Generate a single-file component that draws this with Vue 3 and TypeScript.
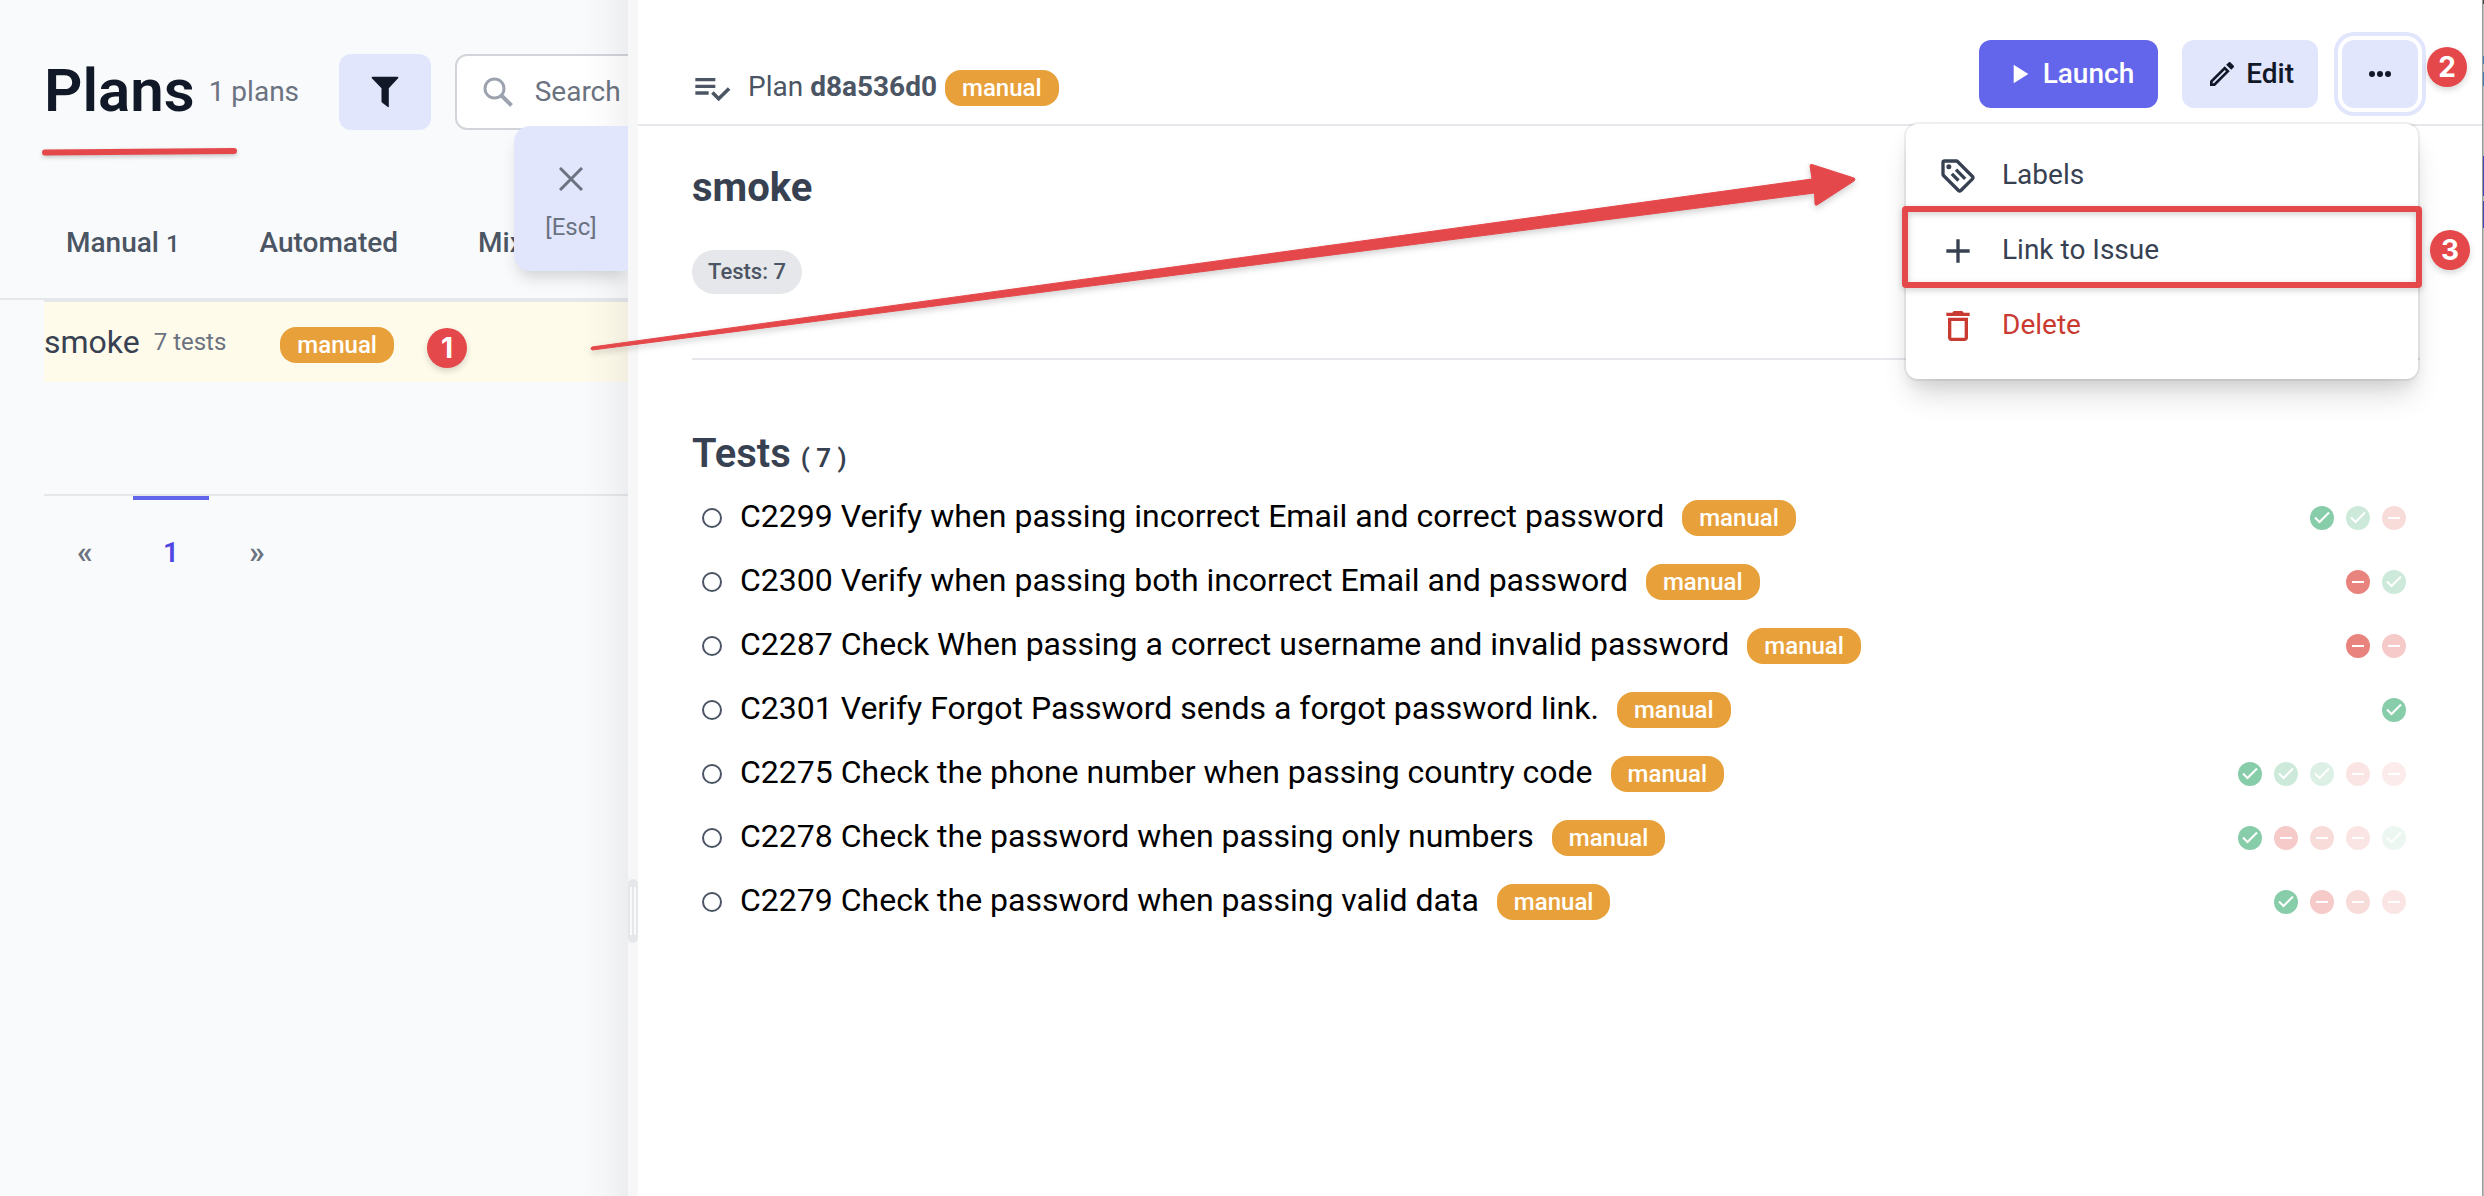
<script setup lang="ts">
import { ref } from 'vue'

type Result = 'pass' | 'fail'

interface Run {
  result: Result
  opacity: number
}

interface TestCase {
  title: string
  runs: Run[]
}

const fade = [1, 0.42, 0.28, 0.2, 0.15]

function runs(...list: [Result, number][]): Run[] {
  return list.map(([result, step]) => ({ result, opacity: fade[step] ?? 0.15 }))
}

const tests: TestCase[] = [
  { title: 'C2299 Verify when passing incorrect Email and correct password', runs: runs(['pass', 0], ['pass', 1], ['fail', 2]) },
  { title: 'C2300 Verify when passing both incorrect Email and password', runs: runs(['fail', 0], ['pass', 1]) },
  { title: 'C2287 Check When passing a correct username and invalid password', runs: runs(['fail', 0], ['fail', 1]) },
  { title: 'C2301 Verify Forgot Password sends a forgot password link.', runs: runs(['pass', 0]) },
  { title: 'C2275 Check the phone number when passing country code', runs: runs(['pass', 0], ['pass', 1], ['pass', 2], ['fail', 3], ['fail', 4]) },
  { title: 'C2278 Check the password when passing only numbers', runs: runs(['pass', 0], ['fail', 1], ['fail', 2], ['fail', 3], ['pass', 4]) },
  { title: 'C2279 Check the password when passing valid data', runs: runs(['pass', 0], ['fail', 1], ['fail', 2], ['fail', 3]) },
]

const search = ref('')
</script>

<template>
  <div class="page">
    <section class="plans">
      <header class="plans-head">
        <h1>Plans</h1>
        <span class="count">1 plans</span>
        <button class="filter" type="button" aria-label="Filter">
          <svg width="28" height="40" viewBox="0 0 28 40"><path d="M1.500 1h25q1 0 .8 1.200-.2.800-.9 1.600L17.800 15v22.300q0 1.200-1 .6l-5.500-5.200q-.8-.6-.8-1.500V15L1.600 3.800Q.9 3 .7 2.200.5 1 1.500 1z" fill="#111827" transform="translate(0 4) scale(1 .82)" /></svg>
        </button>
        <label class="search">
          <svg width="30" height="30" viewBox="0 0 30 30" fill="none" stroke="#9ca3af" stroke-width="3"><circle cx="11.500" cy="11.500" r="9.500" /><path d="M18.500 18.500l10 10" stroke-width="4" /></svg>
          <input v-model="search" type="text" placeholder="Search" aria-label="Search" />
        </label>
        <svg class="underline" width="204" height="16" viewBox="0 0 204 16"><path d="M7 8.500L196 7" stroke="#e5484b" stroke-width="6" stroke-linecap="round" /></svg>
      </header>

      <nav class="tabs">
        <a href="#manual">Manual <small>1</small></a>
        <a href="#automated">Automated</a>
        <a href="#mixed">Mixed</a>
      </nav>

      <div class="list">
        <div class="plan-row">
          <a class="plan-name" href="#smoke">smoke</a>
          <span class="plan-tests">7 tests</span>
          <span class="tag">manual</span>
          <span class="step step-one">1</span>
        </div>
        <nav class="pager" aria-label="Pages">
          <button type="button">«</button>
          <button type="button" class="current">1</button>
          <button type="button">»</button>
        </nav>
      </div>

      <div class="edge"></div>
      <button class="esc" type="button">
        <svg width="24" height="24" viewBox="0 0 24 24" stroke="#6b7280" stroke-width="3"><path d="M1 1l22 22M23 1L1 23" /></svg>
        <span>[Esc]</span>
      </button>
    </section>

    <div class="splitter"><span class="grip"></span></div>

    <main class="panel">
      <header class="panel-head">
        <div class="crumb">
          <svg width="40" height="40" viewBox="0 0 24 24" fill="#4b5563"><path d="M14 10H2v2h12v-2zm0-4H2v2h12V6zM2 16h8v-2H2v2zm19.500-4.500L23 13l-6.990 7-4.510-4.500L13 14l3.010 3 5.490-5.500z" /></svg>
          <span class="crumb-text">Plan <b>d8a536d0</b></span>
          <span class="tag">manual</span>
        </div>
        <div class="actions">
          <button class="btn primary" type="button">
            <svg width="32" height="32" viewBox="0 0 24 24" fill="#fff"><path d="M8 5v14l11-7z" /></svg>
            <span>Launch</span>
          </button>
          <button class="btn" type="button">
            <svg width="32" height="32" viewBox="0 0 24 24" fill="#111827"><path d="M14.060 9.020l.92.92L5.920 19H5v-.920l9.060-9.060M17.660 3c-.25 0-.51.100-.7.290l-1.830 1.830 3.750 3.750 1.830-1.830c.39-.39.39-1.020 0-1.410l-2.340-2.340c-.2-.2-.45-.29-.71-.29zm-3.600 3.190L3 17.250V21h3.750L17.810 9.940l-3.750-3.750z" /></svg>
            <span>Edit</span>
          </button>
          <div class="more-wrap">
            <button class="btn more" type="button" aria-label="More">
              <svg width="24" height="8" viewBox="0 0 24 8" fill="#111827"><circle cx="4" cy="4" r="3" /><circle cx="12" cy="4" r="3" /><circle cx="20" cy="4" r="3" /></svg>
            </button>
            <span class="step step-two">2</span>
            <div class="menu">
              <button class="item" type="button">
                <svg width="40" height="40" viewBox="0 0 24 24" fill="#374151"><path d="M21.410 11.580L12.410 2.580A2 2 0 0 0 11 2H4A2 2 0 0 0 2 4V11A2 2 0 0 0 2.590 12.420L11.590 21.420A2 2 0 0 0 13 22A2 2 0 0 0 14.410 21.410L21.410 14.410A2 2 0 0 0 22 13A2 2 0 0 0 21.410 11.580M13 20L4 11V4H11L20 13M6.500 5A1.500 1.500 0 1 1 5 6.500A1.500 1.500 0 0 1 6.500 5M10.090 8.910L11.500 7.500L17 13L15.590 14.410M7.590 11.410L9 10L13 14L11.590 15.410Z" /></svg>
                <span>Labels</span>
              </button>
              <div class="marked">
                <button class="item" type="button">
                  <svg width="40" height="40" viewBox="0 0 24 24" fill="#374151"><path d="M19 13h-6v6h-2v-6H5v-2h6V5h2v6h6v2z" /></svg>
                  <span>Link to Issue</span>
                </button>
                <span class="frame"></span>
                <span class="step step-three">3</span>
              </div>
              <button class="item danger" type="button">
                <svg width="40" height="40" viewBox="0 0 24 24" fill="#c93a31"><path d="M6 19c0 1.100.9 2 2 2h8c1.100 0 2-.9 2-2V7H6v12zM8 9h8v10H8V9zm7.500-5l-1-1h-5l-1 1H5v2h14V4z" /></svg>
                <span>Delete</span>
              </button>
            </div>
          </div>
        </div>
      </header>

      <div class="body">
        <h2>smoke</h2>
        <span class="pill">Tests: 7</span>
        <hr />
        <h3>Tests <small>( 7 )</small></h3>
        <ul class="tests">
          <li v-for="test in tests" :key="test.title">
            <span class="ring"></span>
            <a href="#test">{{ test.title }}</a>
            <span class="tag">manual</span>
            <span class="runs">
              <svg v-for="(run, i) in test.runs" :key="i" width="24" height="24" viewBox="0 0 24 24" :style="{ opacity: run.opacity }">
                <circle cx="12" cy="12" r="12" :fill="run.result === 'pass' ? '#88cda9' : '#e8837e'" />
                <path v-if="run.result === 'pass'" d="M5 11.500l4.500 4.500 9.500-9.500" fill="none" stroke="#fff" stroke-width="2" />
                <path v-else d="M6 12h12" stroke="#fff" stroke-width="2" />
              </svg>
            </span>
          </li>
        </ul>
      </div>
    </main>

    <div class="behind"></div>

    <svg class="arrow" width="1290" height="224" viewBox="0 0 1290 224">
      <path d="M8 207L1228 39l-2-13q0-2 2-1.500l42 13.500q2 1 0 3l-37 24q-2 1-2-1.500l-.500-10.500L8 210q-2-1.500 0-3z" fill="#e5484b" stroke="#e5484b" stroke-width="1" stroke-linejoin="round" />
    </svg>
  </div>
</template>

<style>
body {
  margin: 0;
}
</style>

<style scoped>
.page {
  position: relative;
  display: grid;
  grid-template-columns: 628px 10px minmax(0, 1fr) 2px;
  min-height: 100vh;
  background: #fff;
  color: #374151;
  font-family: Roboto, "Noto Sans", sans-serif;
  font-size: 28px;
  overflow: hidden;
}
.page * {
  box-sizing: border-box;
}
button {
  font: inherit;
  color: inherit;
  border: 0;
  padding: 0;
  background: none;
}
a {
  color: inherit;
  text-decoration: none;
}
svg {
  display: block;
  flex: none;
}
h1,
h2,
h3,
ul {
  margin: 0;
  padding: 0;
}

/* plan list */
.plans {
  position: relative;
  overflow: hidden;
  background: #f9fafc;
}
.plans-head {
  position: relative;
  display: flex;
  align-items: center;
  height: 76px;
  margin: 54px 0 56px 44px;
}
h1 {
  font-size: 60px;
  font-weight: 600;
  line-height: 72px;
  padding-bottom: 2px;
  color: #111827;
}
.count {
  margin-left: 14px;
  width: 130px;
  flex: none;
  padding-bottom: 2px;
  color: #6b7280;
}
.filter {
  display: flex;
  align-items: center;
  justify-content: center;
  flex: none;
  width: 92px;
  height: 76px;
  margin-right: 24px;
  border-radius: 12px;
  background: #e1e6fd;
}
.search {
  display: flex;
  align-items: center;
  flex: none;
  gap: 22px;
  width: 420px;
  height: 76px;
  padding: 0 26px;
  border: 2px solid #d1d5db;
  border-radius: 12px;
  background: #fff;
}
.search input {
  width: 100%;
  border: 0;
  padding: 0 0 2px;
  outline: 0;
  font: inherit;
  background: none;
}
.search input::placeholder {
  color: #6b7280;
}
.underline {
  position: absolute;
  left: -6px;
  top: 90px;
  filter: drop-shadow(0 2px 2px rgba(0, 0, 0, 0.2));
}
.tabs {
  display: flex;
  align-items: center;
  gap: 80px;
  height: 114px;
  padding-left: 66px;
  border-bottom: 2px solid #e5e7eb;
  font-weight: 500;
  color: #4b5563;
}
.tabs small {
  font-size: 24px;
}
.list {
  margin-left: 44px;
}
.plan-row {
  position: relative;
  display: flex;
  align-items: center;
  height: 82px;
  border-top: 2px solid #e5e7eb;
  background: #fffbeb;
}
.plan-name {
  font-size: 32px;
}
.plan-tests {
  margin: 0 54px 0 14px;
  font-size: 24px;
  color: #6b7280;
}
.tag {
  flex: none;
  height: 36px;
  padding: 0 17px;
  border-radius: 16px;
  background: #e8a13a;
  color: #fff;
  font-size: 24px;
  font-weight: 500;
  line-height: 36px;
}
.plan-row .tag {
  margin-top: 6px;
}
.pager {
  display: flex;
  gap: 10px;
  margin-top: 112px;
  padding-left: 3px;
  border-top: 2px solid #e5e7eb;
}
.pager button {
  width: 76px;
  height: 108px;
  border-top: 4px solid transparent;
  font-size: 32px;
  font-weight: 600;
  color: #6b7280;
}
.pager .current {
  border-color: #6366ea;
  color: #4f46e5;
  font-size: 28px;
}
.edge {
  position: absolute;
  top: 0;
  right: 0;
  bottom: 0;
  width: 48px;
  background: linear-gradient(90deg, rgba(0, 0, 0, 0), rgba(0, 0, 0, 0.015) 50%, rgba(0, 0, 0, 0.05));
}
.esc {
  position: absolute;
  top: 126px;
  right: 0;
  display: flex;
  flex-direction: column;
  align-items: center;
  gap: 22px;
  width: 114px;
  height: 145px;
  padding-top: 41px;
  border-radius: 16px 0 0 16px;
  background: #e1e6fd;
  box-shadow: 0 10px 16px -4px rgba(0, 0, 0, 0.16);
  color: #6b7280;
  font-size: 24px;
}

/* splitter */
.splitter {
  background: #f7f7f7;
}
.grip {
  display: flex;
  width: 10px;
  height: 64px;
  margin-top: 73.5vh;
  padding: 8px 2px;
  border-radius: 5px;
  background: #e5e7eb;
}
.grip::before,
.grip::after {
  content: "";
  width: 2px;
  background: #fafafa;
}
.grip::before {
  margin-right: 2px;
}

/* plan details */
.panel-head {
  display: flex;
  align-items: flex-start;
  justify-content: space-between;
  height: 126px;
  padding: 40px 64px 0 54px;
  border-bottom: 2px solid #e5e7eb;
}
.crumb {
  display: flex;
  align-items: center;
  height: 36px;
  margin-top: 30px;
  color: #4b5563;
}
.crumb-text {
  margin: 0 8px 0 16px;
  padding-bottom: 4px;
}
.crumb b {
  font-weight: 700;
}
.actions {
  display: flex;
  gap: 24px;
}
.btn {
  display: flex;
  align-items: center;
  justify-content: center;
  gap: 8px;
  height: 68px;
  min-width: 76px;
  padding: 0 24px;
  border-radius: 12px;
  background: #e1e6fd;
  color: #111827;
  font-weight: 500;
}
.btn.primary {
  background: #6366ea;
  color: #fff;
}
.btn span {
  padding-bottom: 2px;
}
.more {
  box-shadow: 0 0 0 4px #fff, 0 0 0 8px #e1e6fd;
}
.more-wrap {
  position: relative;
}
.menu {
  position: absolute;
  top: 84px;
  right: 0;
  width: 512px;
  padding: 14px 0 16px;
  border-radius: 12px;
  background: #fff;
  box-shadow: 0 0 0 2px rgba(0, 0, 0, 0.06), 0 20px 30px -6px rgba(0, 0, 0, 0.16), 0 8px 12px rgba(0, 0, 0, 0.05);
}
.item {
  display: flex;
  align-items: center;
  gap: 24px;
  width: 100%;
  height: 75px;
  padding: 0 32px;
  text-align: left;
}
.item span {
  padding-bottom: 2px;
}
.danger {
  color: #c93a31;
}
.marked {
  position: relative;
}
.frame {
  position: absolute;
  inset: -7px -4px 0 -4px;
  border: 6px solid #e5484b;
  border-radius: 4px;
  filter: drop-shadow(0 2px 3px rgba(0, 0, 0, 0.2));
  pointer-events: none;
}
.step {
  position: absolute;
  width: 40px;
  height: 40px;
  border-radius: 50%;
  background: #e5484b;
  box-shadow: 0 3px 6px rgba(0, 0, 0, 0.16);
  color: #fff;
  font-family: Inter, sans-serif;
  font-size: 28px;
  font-weight: 700;
  line-height: 40px;
  text-align: center;
}
.step-one {
  top: 26px;
  left: 383px;
}
.step-two {
  top: 7px;
  left: 85px;
}
.step-three {
  top: 17px;
  right: -52px;
}
.body {
  padding: 38px 62px 60px 54px;
}
h2 {
  font-size: 40px;
  font-weight: 700;
  line-height: 48px;
}
.pill {
  display: block;
  width: fit-content;
  height: 44px;
  margin-top: 38px;
  padding: 0 16px;
  border-radius: 22px;
  background: #e5e7eb;
  color: #4b5563;
  font-size: 22px;
  font-weight: 500;
  line-height: 44px;
}
hr {
  height: 2px;
  margin: 64px 0 70px;
  border: 0;
  background: #e5e7eb;
}
h3 {
  height: 48px;
  font-size: 40px;
  font-weight: 600;
  line-height: 48px;
}
h3 small {
  font-size: 26px;
}
.tests {
  margin-top: 8px;
  list-style: none;
}
.tests li {
  display: flex;
  align-items: center;
  height: 64px;
  padding: 0 14px 0 10px;
}
.tests a {
  margin: 0 18px;
  padding-bottom: 4px;
  color: #000;
  font-size: 32px;
  white-space: nowrap;
}
.ring {
  flex: none;
  width: 20px;
  height: 20px;
  border: 2px solid #4b5563;
  border-radius: 50%;
}
.runs {
  display: flex;
  gap: 12px;
  margin-left: auto;
}

/* sliver of the window behind the drawer */
.behind {
  border-left: 1px solid #9b9b9b;
  background: linear-gradient(#444 4px, #bdbdbd 4px 56px, #3f7fb5 56px 64px, #bdbdbd 64px 72px, #3f7fb5 72px 86px, #bdbdbd 86px 156px, #4a43b8 156px 196px, #bdbdbd 196px 201px, #4a43b8 201px 228px, #bdbdbd 228px);
}
.arrow {
  position: absolute;
  top: 140px;
  left: 584px;
  filter: drop-shadow(0 3px 3px rgba(0, 0, 0, 0.18));
  pointer-events: none;
}
</style>
